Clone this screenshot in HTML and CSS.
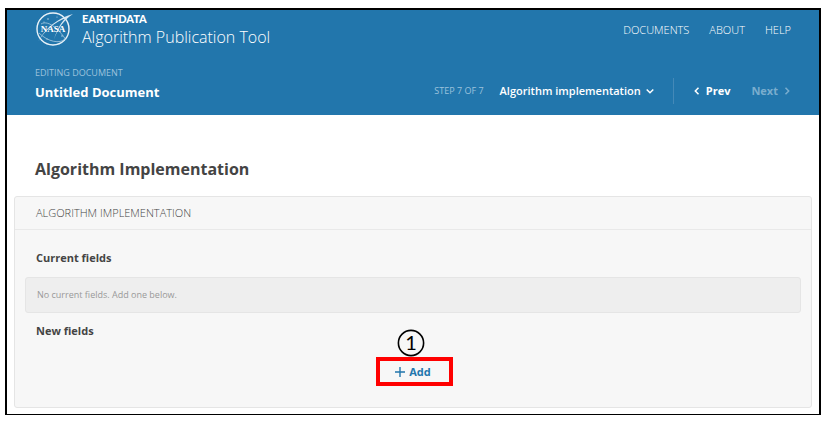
FILE: index.html
```html
<!DOCTYPE html>
<html lang="en">
<head>
<meta charset="utf-8">
<title>Algorithm Publication Tool</title>
<link rel="stylesheet" href="styles.css">
</head>
<body>
<div class="frame">
  <header class="header">
    <div class="bar">
      <a class="brand" href="#">
        <svg class="logo" viewBox="0 0 40 36" aria-hidden="true">
          <circle cx="18" cy="18" r="16" fill="none" stroke="#e9f2f8" stroke-width="1.4"/>
          <path d="M3 31C10 17 23 7 38 3C29 9 24 16 19 28C23 17 26 11 31 7C20 11 10 19 3 31Z" fill="#d8e8f3"/>
          <path d="M4 22C13 31 25 33 30 28M6 13C14 8 26 21 31 29" fill="none" stroke="#a9cbe2" stroke-width=".8"/>
          <g fill="#cfe2ef"><circle cx="13" cy="8" r=".7"/><circle cx="22" cy="6" r=".5"/><circle cx="27" cy="25" r=".7"/><circle cx="12" cy="28" r=".6"/><circle cx="9" cy="11" r=".5"/></g>
          <text class="logo-text" x="18" y="21" text-anchor="middle">NASA</text>
        </svg>
        <span class="brand-text"><strong class="brand-org">EARTHDATA</strong><span class="brand-name">Algorithm Publication Tool</span></span>
      </a>
      <nav class="nav">
        <a href="#">DOCUMENTS</a>
        <a href="#">ABOUT</a>
        <a href="#">HELP</a>
      </nav>
    </div>
    <div class="bar">
      <div class="document">
        <span class="eyebrow">EDITING DOCUMENT</span>
        <strong class="document-name">Untitled Document</strong>
      </div>
      <div class="steps">
        <span class="eyebrow">STEP 7 OF 7</span>
        <button class="step-button step-menu" type="button">Algorithm implementation
          <svg class="chevron" viewBox="0 0 8 8" aria-hidden="true"><path d="M.7 2.5L4 5.7L7.3 2.5"/></svg>
        </button>
        <button class="step-button step-prev" type="button"><svg class="chevron" viewBox="0 0 8 8" aria-hidden="true"><path d="M5.5 .7L2.3 4L5.5 7.3"/></svg>Prev</button>
        <button class="step-button step-next" type="button" disabled>Next<svg class="chevron" viewBox="0 0 8 8" aria-hidden="true"><path d="M2.5 .7L5.7 4L2.5 7.3"/></svg></button>
      </div>
    </div>
  </header>
  <main class="main">
    <h1 class="title">Algorithm Implementation</h1>
    <section class="panel">
      <h2 class="panel-title">ALGORITHM IMPLEMENTATION</h2>
      <div class="panel-body">
        <h3 class="field-title">Current fields</h3>
        <p class="empty">No current fields. Add one below.</p>
        <h3 class="field-title">New fields</h3>
        <div class="add-area">
          <svg class="marker" viewBox="0 0 28 28" role="img" aria-label="1"><circle cx="14" cy="14" r="12.6"/><text x="14" y="21" text-anchor="middle">1</text></svg>
          <button class="add" type="button"><svg class="plus" viewBox="0 0 10 10" aria-hidden="true"><path d="M5 0V10M0 5H10"/></svg>Add</button>
        </div>
      </div>
    </section>
  </main>
</div>
</body>
</html>
```
FILE: styles.css
```css
* { box-sizing: border-box; }

body {
  margin: 0;
  padding: 8px 7px 7px 5px;
  background: #fff;
  color: #444;
  font: 11px/16px "Open Sans", "Noto Sans", sans-serif;
}

h1, h2, h3, p { margin: 0; }
a { color: inherit; text-decoration: none; }
button { font: inherit; cursor: pointer; }

.frame {
  border: 2px solid #000;
  border-bottom-width: 1px;
}

.header {
  padding: 0 28px 10px;
  background: #2276ac;
  color: #fff;
}

.bar {
  display: flex;
  align-items: center;
  justify-content: space-between;
}

.brand { display: flex; gap: 7px; }
.logo { width: 40px; height: 36px; margin-top: 1px; }
.logo-text { fill: #fff; font: bold 9px "Liberation Serif", serif; }
.brand-text { display: flex; flex-direction: column; padding-top: 1px; }
.brand-org { font: 900 11px/16px Lato, sans-serif; }
.brand-name { font-size: 16px; line-height: 20px; font-weight: 300; }

.nav { display: flex; gap: 20px; padding-top: 3px; font-weight: 300; }

.document { display: flex; flex-direction: column; padding: 18px 0 2px; }
.eyebrow { color: #9cc2dc; font-size: 9px; }
.document-name { font-size: 13px; line-height: 22px; }

.steps {
  display: flex;
  align-items: center;
  height: 28px;
  margin-top: 30px;
}

.step-button {
  display: flex;
  align-items: center;
  gap: 5px;
  padding: 0;
  border: 0;
  background: none;
  color: #fff;
  font-weight: 700;
}

.step-menu { margin-left: 16px; font-weight: 600; }

.step-prev {
  height: 26px;
  margin: 0 21px 0 19px;
  padding-left: 19px;
  border-left: 1px solid #4489b8;
}

.step-next { color: #7aadce; }

.chevron {
  width: 8px;
  height: 8px;
  fill: none;
  stroke: currentColor;
  stroke-width: 1.5;
}

.main { padding: 42px 7px 6px; }

.title {
  padding: 0 21px;
  font-size: 16px;
  line-height: 24px;
}

.panel {
  margin-top: 15px;
  border: 1px solid #e5e5e5;
  border-radius: 3px;
  background: #f7f7f7;
}

.panel-title {
  padding: 8px 21px;
  border-bottom: 1px solid #e9e9e9;
  color: #444;
  font-size: 11px;
  font-weight: 300;
}

.panel-body { padding: 20px 10px 21px; }

.field-title {
  padding: 0 11px;
  font-size: 11px;
}

.empty {
  margin: 11px 0 10px;
  padding: 9px 11px;
  border: 1px solid #e5e5e5;
  border-radius: 3px;
  background: #eee;
  color: #999;
  font-size: 9px;
}

.add-area {
  display: flex;
  flex-direction: column;
  align-items: center;
  margin: -10px 0 0 3px;
}

.marker { width: 28px; height: 28px; margin-right: 7px; }
.marker circle { fill: none; stroke: #000; stroke-width: 1.6; }
.marker text { fill: #000; font: 20px Lato, sans-serif; }

.add {
  display: flex;
  align-items: center;
  justify-content: center;
  gap: 4px;
  width: 77px;
  height: 29px;
  padding: 0 3px 0 0;
  border: 4px solid #f00;
  background: none;
  color: #2276ac;
  font-weight: 700;
}

.plus { width: 10px; height: 10px; fill: none; stroke: currentColor; stroke-width: 1.4; }
```
